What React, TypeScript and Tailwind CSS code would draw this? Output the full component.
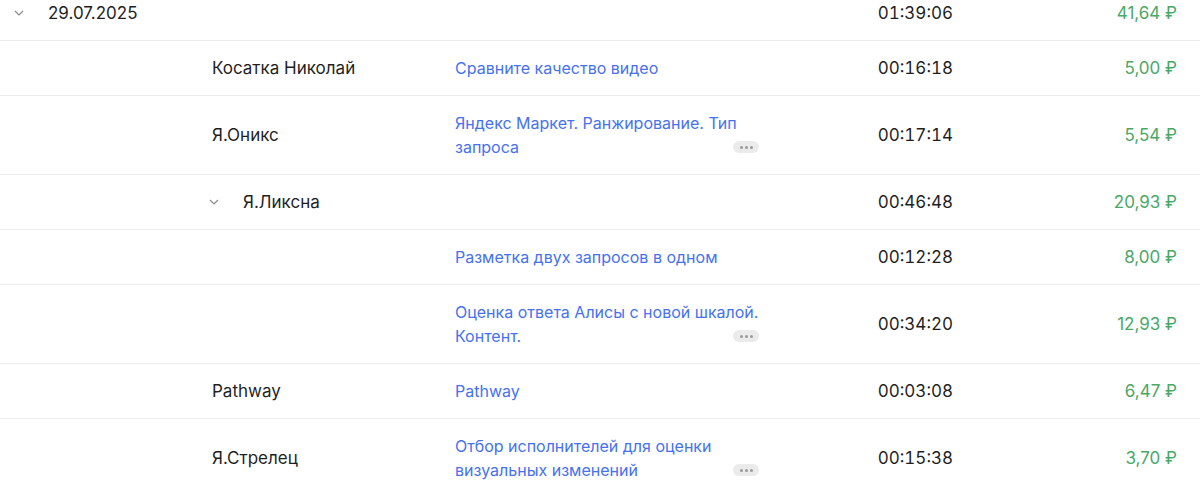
import React from 'react';

type Row = {
  name?: string;
  task?: string;
  time: string;
  sum: string;
  group?: boolean;
  more?: boolean;
};

const rows: Row[] = [
  { name: 'Косатка Николай', task: 'Сравните качество видео', time: '00:16:18', sum: '5,00 ₽' },
  { name: 'Я.Оникс', task: 'Яндекс Маркет. Ранжирование. Тип запроса', time: '00:17:14', sum: '5,54 ₽', more: true },
  { name: 'Я.Ликсна', time: '00:46:48', sum: '20,93 ₽', group: true },
  { task: 'Разметка двух запросов в одном', time: '00:12:28', sum: '8,00 ₽' },
  { task: 'Оценка ответа Алисы с новой шкалой. Контент.', time: '00:34:20', sum: '12,93 ₽', more: true },
  { name: 'Pathway', task: 'Pathway', time: '00:03:08', sum: '6,47 ₽' },
  { name: 'Я.Стрелец', task: 'Отбор исполнителей для оценки визуальных изменений', time: '00:15:38', sum: '3,70 ₽', more: true },
];

const rowCls =
  'grid grid-cols-[212px_243px_310px_188px_1fr] items-center border-b border-[#ececec] py-[15px] pr-[23px]';

function Chevron() {
  return (
    <svg width="10" height="6" viewBox="0 0 10 6" fill="none" className="text-[#8a8a8a]">
      <path d="M1 1l4 4 4-4" stroke="currentColor" strokeWidth="1.2" />
    </svg>
  );
}

function MoreBadge() {
  return (
    <span className="absolute right-[6px] bottom-[6px] flex h-[12px] w-[26px] items-center justify-center gap-[2px] rounded-full bg-[#ebebeb]">
      <span className="h-[3px] w-[3px] rounded-full bg-[#9a9a9a]" />
      <span className="h-[3px] w-[3px] rounded-full bg-[#9a9a9a]" />
      <span className="h-[3px] w-[3px] rounded-full bg-[#9a9a9a]" />
    </span>
  );
}

export default function App() {
  return (
    <div className="w-[1200px] h-[481px] overflow-hidden bg-white text-[17px] leading-6 text-[#1f1f1f] font-['Inter','Noto_Sans',sans-serif]">
      <div className="-mt-[14px]">
        <div className={rowCls}>
          <div className="col-span-3 flex items-center">
            <span className="ml-[14px] w-[34px]"><Chevron /></span>
            <span>29.07.2025</span>
          </div>
          <div className="text-right tabular-nums">01:39:06</div>
          <div className="text-right text-[#4aa865]">41,64 ₽</div>
        </div>

        {rows.map((r, i) => (
          <div key={i} className={rowCls}>
            <div />
            {r.group ? (
              <div className="col-span-2 flex items-center">
                <span className="-ml-[3px] w-[34px]"><Chevron /></span>
                <span>{r.name}</span>
              </div>
            ) : (
              <>
                <div>{r.name}</div>
                <div className="relative text-[16px] text-[#4671f0]">
                  {r.task}
                  {r.more && <MoreBadge />}
                </div>
              </>
            )}
            <div className="text-right tabular-nums">{r.time}</div>
            <div className="text-right text-[#4aa865]">{r.sum}</div>
          </div>
        ))}
      </div>
    </div>
  );
}
